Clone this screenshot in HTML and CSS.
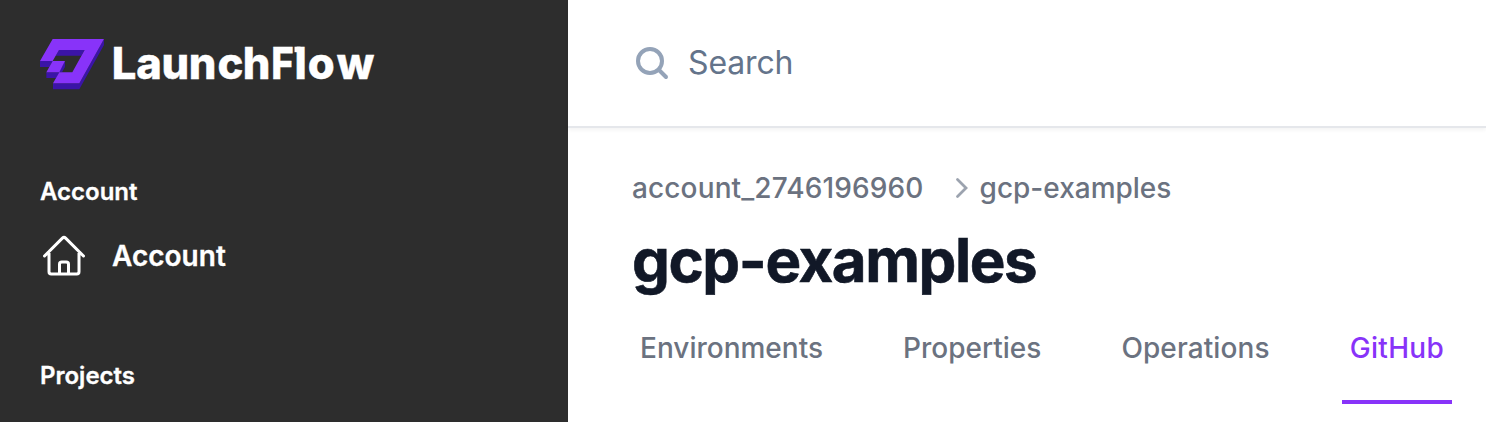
FILE: index.html
```html
<!DOCTYPE html>
<html lang="en">
<head>
<meta charset="utf-8">
<title>LaunchFlow</title>
<link rel="stylesheet" href="styles.css">
</head>
<body>
<aside class="sidebar">
  <div class="logo">
    <svg class="logo-mark" viewBox="30 27 193 152">
      <path fill="#3b14a7" d="M30 93H68L58 111H30ZM49 127H88L79 144H49ZM69 160H148L222 27V45L148 178H69ZM87 60H164L154 77H77ZM105 93V111L96 127H86Z"/>
      <path fill="#8833f9" fill-rule="evenodd" d="M68 27H222L148 160H69L88 127H49L68 93H30ZM87 60L68 93H105L88 127H127L164 60Z"/>
    </svg>
    <svg class="logo-word" viewBox="0 0 270 60">
      <text y="48.500"><tspan x="-.3 24.300 49.500 76.800 105.500 130.800">Launch</tspan><tspan x="159.200" textLength="22.500" lengthAdjust="spacingAndGlyphs">F</tspan><tspan x="182.500 195.700 224.800">low</tspan></text>
      <rect x="182.500" y="16.700" width="6" height="5.500"/>
    </svg>
  </div>
  <h2 class="group-title">Account</h2>
  <a class="nav-item">
    <svg class="home" viewBox="0 0 24 24"><path d="m2.250 12 8.954-8.955a1.126 1.126 0 0 1 1.591 0L21.750 12M4.500 9.750v10.125c0 .621.504 1.125 1.125 1.125H9.750v-4.875c0-.621.504-1.125 1.125-1.125h2.250c.621 0 1.125.504 1.125 1.125V21h4.125c.621 0 1.125-.504 1.125-1.125V9.750M8.250 21h8.250"/></svg>
    <span>Account</span>
  </a>
  <h2 class="group-title">Projects</h2>
</aside>
<main class="main">
  <header class="topbar">
    <svg class="search-icon" viewBox="0 0 20 20"><circle cx="9" cy="9" r="6"/><path d="M13.500 13.500L17 17"/></svg>
    <span class="search-label">Search</span>
  </header>
  <section class="content">
    <nav class="crumbs">
      <span class="account">account_2746196960</span>
      <svg class="chevron" viewBox="0 0 14 22"><path d="M2.500 2.500l8.500 8.500-8.500 8.500"/></svg>
      <span>gcp-examples</span>
    </nav>
    <h1 class="title">gcp-examples</h1>
    <nav class="tabs">
      <a class="tab">Environments</a>
      <a class="tab">Properties</a>
      <a class="tab">Operations</a>
      <a class="tab active">GitHub</a>
    </nav>
  </section>
</main>
</body>
</html>
```
FILE: styles.css
```css
* { box-sizing: border-box; }
body {
  margin: 0;
  height: 422px;
  display: flex;
  overflow: hidden;
  background: #fff;
  font-family: Inter, sans-serif;
  font-optical-sizing: none;
}
h1, h2 { margin: 0; }
svg { display: block; flex: none; }
.sidebar {
  width: 568px;
  flex: none;
  padding: 0 40px;
  background: #2d2d2d;
  color: #fff;
}
.logo { display: flex; height: 128px; padding-top: 30px; }
.logo-mark { width: 64.300px; height: 50.700px; margin-top: 9px; }
.logo-word { width: 270px; height: 60px; margin-left: 7.700px; fill: #fff; }
.logo-word text { font-size: 43.500px; font-weight: 800; stroke: #fff; stroke-width: .4px; }
.group-title {
  padding-top: 40px;
  font-size: 24px;
  line-height: 48px;
  font-weight: 600;
  -webkit-text-stroke: .3px #fff;
}
.nav-item {
  display: flex;
  align-items: center;
  gap: 24px;
  height: 80px;
  margin-bottom: 16px;
  font-size: 28px;
  font-weight: 600;
  -webkit-text-stroke: .3px #fff;
}
.home {
  width: 48px;
  height: 48px;
  fill: none;
  stroke: #fff;
  stroke-width: 1.500;
  stroke-linecap: round;
  stroke-linejoin: round;
}
.main { flex: 1; min-width: 0; }
.topbar {
  display: flex;
  align-items: center;
  gap: 16px;
  height: 128px;
  padding-left: 64px;
  border-bottom: 2px solid #e5e7eb;
  box-shadow: 0 2px 4px rgba(0, 0, 0, .05);
  color: #64748b;
  font-size: 32px;
}
.search-label { padding-bottom: 2px; letter-spacing: -.15px; }
.search-icon {
  width: 40px;
  height: 40px;
  fill: none;
  stroke: #94a3b8;
  stroke-width: 2;
  stroke-linecap: round;
}
.content { padding: 40px 34px 0 64px; }
.crumbs {
  display: flex;
  align-items: center;
  height: 40px;
  font-size: 28px;
  font-weight: 500;
  color: #6b7280;
}
.account { letter-spacing: .13px; }
.chevron {
  width: 14px;
  height: 22px;
  margin: 0 11px 0 31px;
  fill: none;
  stroke: #9ca3af;
  stroke-width: 2.800;
  stroke-linecap: round;
}
.title {
  margin-top: 16px;
  font-size: 60px;
  line-height: 72px;
  font-weight: 700;
  letter-spacing: -1.420px;
  color: #111827;
  -webkit-text-stroke: .6px #111827;
}
.tabs { display: flex; gap: 64px; margin-top: 32px; }
.tab {
  height: 76px;
  padding: 0 8px;
  border-bottom: 4px solid transparent;
  font-size: 28px;
  line-height: 40px;
  font-weight: 500;
  color: #6b7280;
}
.tab:nth-child(3) { letter-spacing: .1px; }
.tab.active { letter-spacing: .33px; color: #8833f9; border-color: #8833f9; }
```
